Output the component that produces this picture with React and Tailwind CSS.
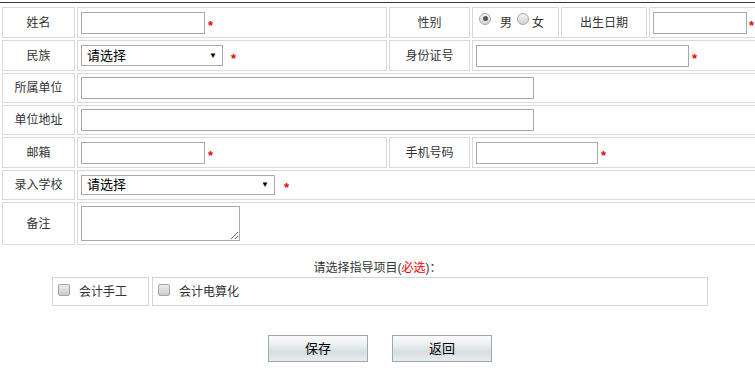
import React from "react";

const cellBase = "border border-[#d9d9d9] flex items-center";

function Label({ children }) {
  return (
    <div className={`${cellBase} justify-center text-[12px] text-[#333]`}>{children}</div>
  );
}

function Star({ className = "ml-[3px]" }) {
  return (
    <span className={`${className} text-[#e00] text-[13px] font-bold leading-[12px] mt-[6px] font-['Liberation_Sans',sans-serif]`}>*</span>
  );
}

function TextInput({ w }) {
  return (
    <div
      className="h-[22px] border border-[#a9a9a9] bg-white"
      style={{ width: w }}
    />
  );
}

function FakeSelect({ w, h }) {
  return (
    <div
      className="border border-[#a9a9a9] bg-white flex items-center justify-between pl-[5px] pr-[5px] text-[13px] text-black"
      style={{ width: w, height: h }}
    >
      <span className="leading-[16px]">请选择</span>
      <span className="text-[8px] leading-[8px]">▼</span>
    </div>
  );
}

function Radio({ checked }) {
  return (
    <span className="mb-[8px] w-[12px] h-[12px] rounded-full border border-[#a8a8a8] bg-[linear-gradient(#f4f4f4,#d4d4d4)] flex items-center justify-center shrink-0">
      {checked && <span className="w-[5px] h-[5px] rounded-full bg-[#555]" />}
    </span>
  );
}

function Checkbox() {
  return (
    <span className="w-[12px] h-[12px] rounded-[2px] border border-[#a6a6a6] bg-[linear-gradient(#ececec,#cbcbcb)] shrink-0 mb-[3px]" />
  );
}

function Button({ children, className = "" }) {
  return (
    <button className={`w-[100px] h-[27px] border border-[#9aaab0] bg-[linear-gradient(#fafbfb_0%,#eaeff1_35%,#d5dee1_65%,#e8edef_100%)] text-[13px] text-black leading-[16px] ${className}`}>
      {children}
    </button>
  );
}

export default function App() {
  return (
    <div className="w-[755px] h-[381px] overflow-hidden bg-white font-['Liberation_Sans','Noto_Sans_CJK_SC',sans-serif]">
      <div className="pt-[2px]">
        <div className="h-px bg-[#3a3a3a]" />
      </div>
      <div className="mt-[4px] pl-[2px] w-[800px] grid grid-cols-[73px_310px_81px_87px_86px_130px] grid-rows-[31px_31px_30px_30px_31px_30px_43px] gap-[2px]">
        {/* row 1 */}
        <Label>姓名</Label>
        <div className={`${cellBase} pl-[3px]`}>
          <TextInput w={124} />
          <Star />
        </div>
        <Label>性别</Label>
        <div className={`${cellBase} pl-[6px] text-[12px] text-[#333]`}>
          <Radio checked />
          <span className="ml-[9px] leading-[14px]">男</span>
          <span className="ml-[5px]"><Radio /></span>
          <span className="ml-[3px] leading-[14px]">女</span>
        </div>
        <Label>出生日期</Label>
        <div className={`${cellBase} pl-[3px]`}>
          <TextInput w={94} />
          <Star className="ml-[2px]" />
        </div>

        {/* row 2 */}
        <Label>民族</Label>
        <div className={`${cellBase} pl-[3px]`}>
          <FakeSelect w={142} h={21} />
          <Star className="ml-[8px]" />
        </div>
        <Label>身份证号</Label>
        <div className={`${cellBase} col-span-3 pl-[3px]`}>
          <TextInput w={213} />
          <Star className="ml-[3px]" />
        </div>

        {/* row 3 */}
        <Label>所属单位</Label>
        <div className={`${cellBase} col-span-5 pl-[3px]`}>
          <TextInput w={453} />
        </div>

        {/* row 4 */}
        <Label>单位地址</Label>
        <div className={`${cellBase} col-span-5 pl-[3px]`}>
          <TextInput w={453} />
        </div>

        {/* row 5 */}
        <Label>邮箱</Label>
        <div className={`${cellBase} pl-[3px]`}>
          <TextInput w={124} />
          <Star />
        </div>
        <Label>手机号码</Label>
        <div className={`${cellBase} col-span-3 pl-[3px]`}>
          <TextInput w={122} />
          <Star className="ml-[3px]" />
        </div>

        {/* row 6 */}
        <Label>录入学校</Label>
        <div className={`${cellBase} col-span-5 pl-[3px]`}>
          <FakeSelect w={194} h={20} />
          <Star className="ml-[9px]" />
        </div>

        {/* row 7 */}
        <Label>备注</Label>
        <div className={`${cellBase} col-span-5 pl-[3px]`}>
          <textarea className="w-[159px] h-[35px] border border-[#a9a9a9] bg-white outline-none" />
        </div>
      </div>

      <div className="mt-[15px] h-[16px] text-center text-[12px] leading-[16px] text-[#333]">
        请选择指导项目(<span className="text-[#e00]">必选</span>)：
      </div>

      <div className="mt-[1px] ml-[52px] flex gap-[3px] h-[29px]">
        <div className="w-[97px] border border-[#d4d4d4] flex items-center pl-[5px] text-[12px] text-[#333]">
          <Checkbox />
          <span className="ml-[9px] leading-[14px]">会计手工</span>
        </div>
        <div className="w-[556px] border border-[#d4d4d4] flex items-center pl-[5px] text-[12px] text-[#333]">
          <Checkbox />
          <span className="ml-[9px] leading-[14px]">会计电算化</span>
        </div>
      </div>

      <div className="mt-[29px] ml-[268px] flex gap-[24px]">
        <Button>保存</Button>
        <Button>返回</Button>
      </div>
    </div>
  );
}
